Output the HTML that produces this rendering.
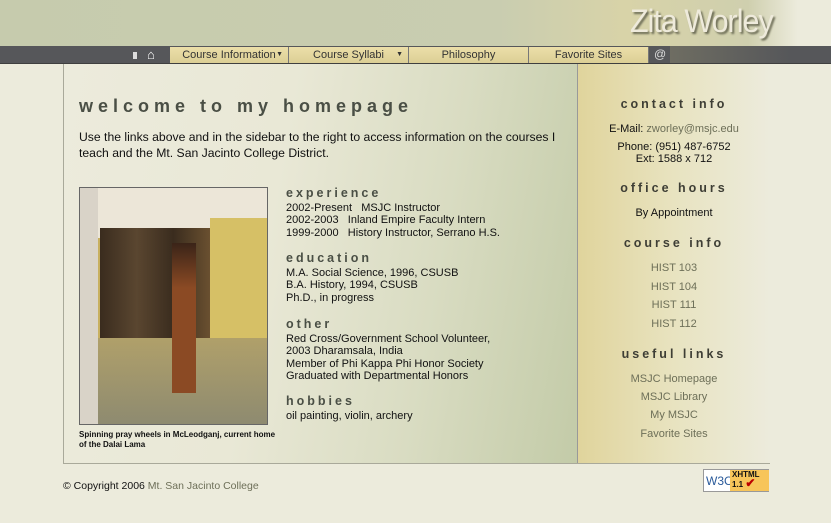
<!DOCTYPE html>
<html><head><meta charset="utf-8"><style>
*{margin:0;padding:0;box-sizing:border-box}
body{width:831px;height:523px;background:#ecebdc;font-family:"Liberation Sans",sans-serif;position:relative;overflow:hidden;color:#111}
.hdr{position:absolute;left:0;top:0;width:831px;height:46px;background:linear-gradient(90deg,#c6cbad 0%,#c9cdb0 60%,#d8d3a8 75%,#cfcfae 90%,#ecebdc 96%)}
.hdr .t{position:absolute;left:630px;top:3px;font-size:32px;color:#eeeadb;text-shadow:2px 2px 2px #6b6b55;letter-spacing:-1px;transform:scaleX(.95);transform-origin:left}
.nav{position:absolute;left:0;top:46px;width:831px;height:18px;background:#56575a;border-bottom:1px solid #3f3f3f}
.nav .b{position:absolute;top:1px;height:16px;background:linear-gradient(#ecdfa9,#dccf95);border-right:1px solid #777;font-size:11px;color:#333;text-align:center;line-height:16px}
.nav .b i{position:absolute;right:5px;top:0;font-style:normal;font-size:7px}
.main{position:absolute;left:63px;top:64px;width:707px;height:400px;border:1px solid #a9a99a;border-top:none}
.left{position:absolute;left:0;top:0;width:513px;height:399px;background:linear-gradient(100deg,#ecebdc 0%,#e9e8d6 40%,#d9dcc2 70%,#c3cba8 100%)}
.side{position:absolute;left:513px;top:0;width:193px;height:399px;border-left:1px solid #999;background:linear-gradient(90deg,#e0d49c 0%,#e8e3c0 50%,#ecebdc 100%);text-align:center;font-size:11px}
h1{position:absolute;left:15px;top:32px;font-size:18px;letter-spacing:5px;color:#4a4f45;font-weight:bold}
.intro{position:absolute;left:15px;top:65px;width:490px;font-size:12.2px;line-height:16px}
.photo{position:absolute;left:15px;top:123px;width:189px;height:238px;border:1px solid #666;overflow:hidden;background:#c8b060}
.cap{position:absolute;left:15px;top:366px;width:200px;font-size:8px;font-weight:bold;line-height:10px}
.sec{position:absolute;left:222px;font-size:11px;line-height:12.5px}
.sec h2{font-size:12.5px;letter-spacing:3px;color:#4a4f45;margin-bottom:2px}
.side h3{font-size:12.5px;letter-spacing:3px;color:#3e3e35;position:absolute;width:100%}
.side p{position:absolute;width:100%;line-height:12px}
.lk{color:#6d6f58}
.ft{position:absolute;left:63px;top:480px;font-size:10.5px}
.w3c{position:absolute;left:703px;top:469px;width:66px;height:23px;border:1px solid #999;background:#fff;font-size:10px}
</style></head><body>
<div class="hdr"><div class="t">Zita Worley</div></div>
<div class="nav">
<div style="position:absolute;left:133px;top:6px;width:4px;height:7px;background:#ddd"></div>
<div style="position:absolute;left:147px;top:2px;color:#fff;font-size:13px;line-height:14px">&#8962;</div>
<div class="b" style="left:170px;width:119px">Course Information<i>▼</i></div>
<div class="b" style="left:289px;width:120px">Course Syllabi<i>▼</i></div>
<div class="b" style="left:409px;width:120px">Philosophy</div>
<div class="b" style="left:529px;width:120px">Favorite Sites</div>
<div style="position:absolute;left:654px;top:1px;color:#ddd;font-size:12px">@</div>
<div style="position:absolute;left:670px;top:0;width:120px;height:17px;background:linear-gradient(90deg,#6e6d62,#56575a)"></div>
</div>
<div class="main">
<div class="left">
<h1>welcome to my homepage</h1>
<div class="intro">Use the links above and in the sidebar to the right to access information on the courses I teach and the Mt. San Jacinto College District.</div>
<div class="photo">
<div style="position:absolute;left:0;top:0;width:189px;height:50px;background:#ece6d8"></div>
<div style="position:absolute;left:0;top:0;width:18px;height:238px;background:#d9d3c8"></div>
<div style="position:absolute;left:20px;top:40px;width:110px;height:110px;background:linear-gradient(90deg,#3a2c1e,#5a4630,#3a2c1e,#6a5030)"></div>
<div style="position:absolute;left:130px;top:30px;width:59px;height:120px;background:#d6c066"></div>
<div style="position:absolute;left:18px;top:150px;width:171px;height:88px;background:linear-gradient(#b0a06a,#8d8a70)"></div>
<div style="position:absolute;left:92px;top:55px;width:24px;height:150px;background:linear-gradient(#3a2418,#8b4a24 30%,#8b4a24)"></div>
</div>
<div class="cap">Spinning pray wheels in McLeodganj, current home of the Dalai Lama</div>
<div class="sec" style="top:123px"><h2>experience</h2>2002-Present &nbsp;&nbsp;MSJC Instructor<br>2002-2003 &nbsp;&nbsp;Inland Empire Faculty Intern<br>1999-2000 &nbsp;&nbsp;History Instructor, Serrano H.S.</div>
<div class="sec" style="top:188px"><h2>education</h2>M.A. Social Science, 1996, CSUSB<br>B.A. History, 1994, CSUSB<br>Ph.D., in progress</div>
<div class="sec" style="top:254px"><h2>other</h2>Red Cross/Government School Volunteer,<br>2003 Dharamsala, India<br>Member of Phi Kappa Phi Honor Society<br>Graduated with Departmental Honors</div>
<div class="sec" style="top:331px"><h2>hobbies</h2>oil painting, violin, archery</div>
</div>
<div class="side">
<h3 style="top:33px">contact info</h3>
<p style="top:59px">E-Mail: <span class="lk">zworley@msjc.edu</span></p>
<p style="top:77px">Phone: (951) 487-6752<br>Ext: 1588 x 712</p>
<h3 style="top:117px">office hours</h3>
<p style="top:143px">By Appointment</p>
<h3 style="top:172px">course info</h3>
<p class="lk" style="top:198px">HIST 103</p>
<p class="lk" style="top:217px">HIST 104</p>
<p class="lk" style="top:235px">HIST 111</p>
<p class="lk" style="top:254px">HIST 112</p>
<h3 style="top:283px">useful links</h3>
<p class="lk" style="top:309px">MSJC Homepage</p>
<p class="lk" style="top:327px">MSJC Library</p>
<p class="lk" style="top:345px">My MSJC</p>
<p class="lk" style="top:364px">Favorite Sites</p>
</div>
</div>
<div class="ft">© Copyright 2006 <span class="lk">Mt. San Jacinto College</span></div>
<div class="w3c"><span style="position:absolute;left:2px;top:4px;color:#2a5a9a;font-size:12px">W3C</span><span style="position:absolute;left:26px;top:0;width:39px;height:21px;background:#f7c55a;font-weight:bold;font-size:8px;padding-left:2px;line-height:9px">XHTML<br>1.1 <b style="color:#b00;font-size:12px">✔</b></span></div>
</body></html>
